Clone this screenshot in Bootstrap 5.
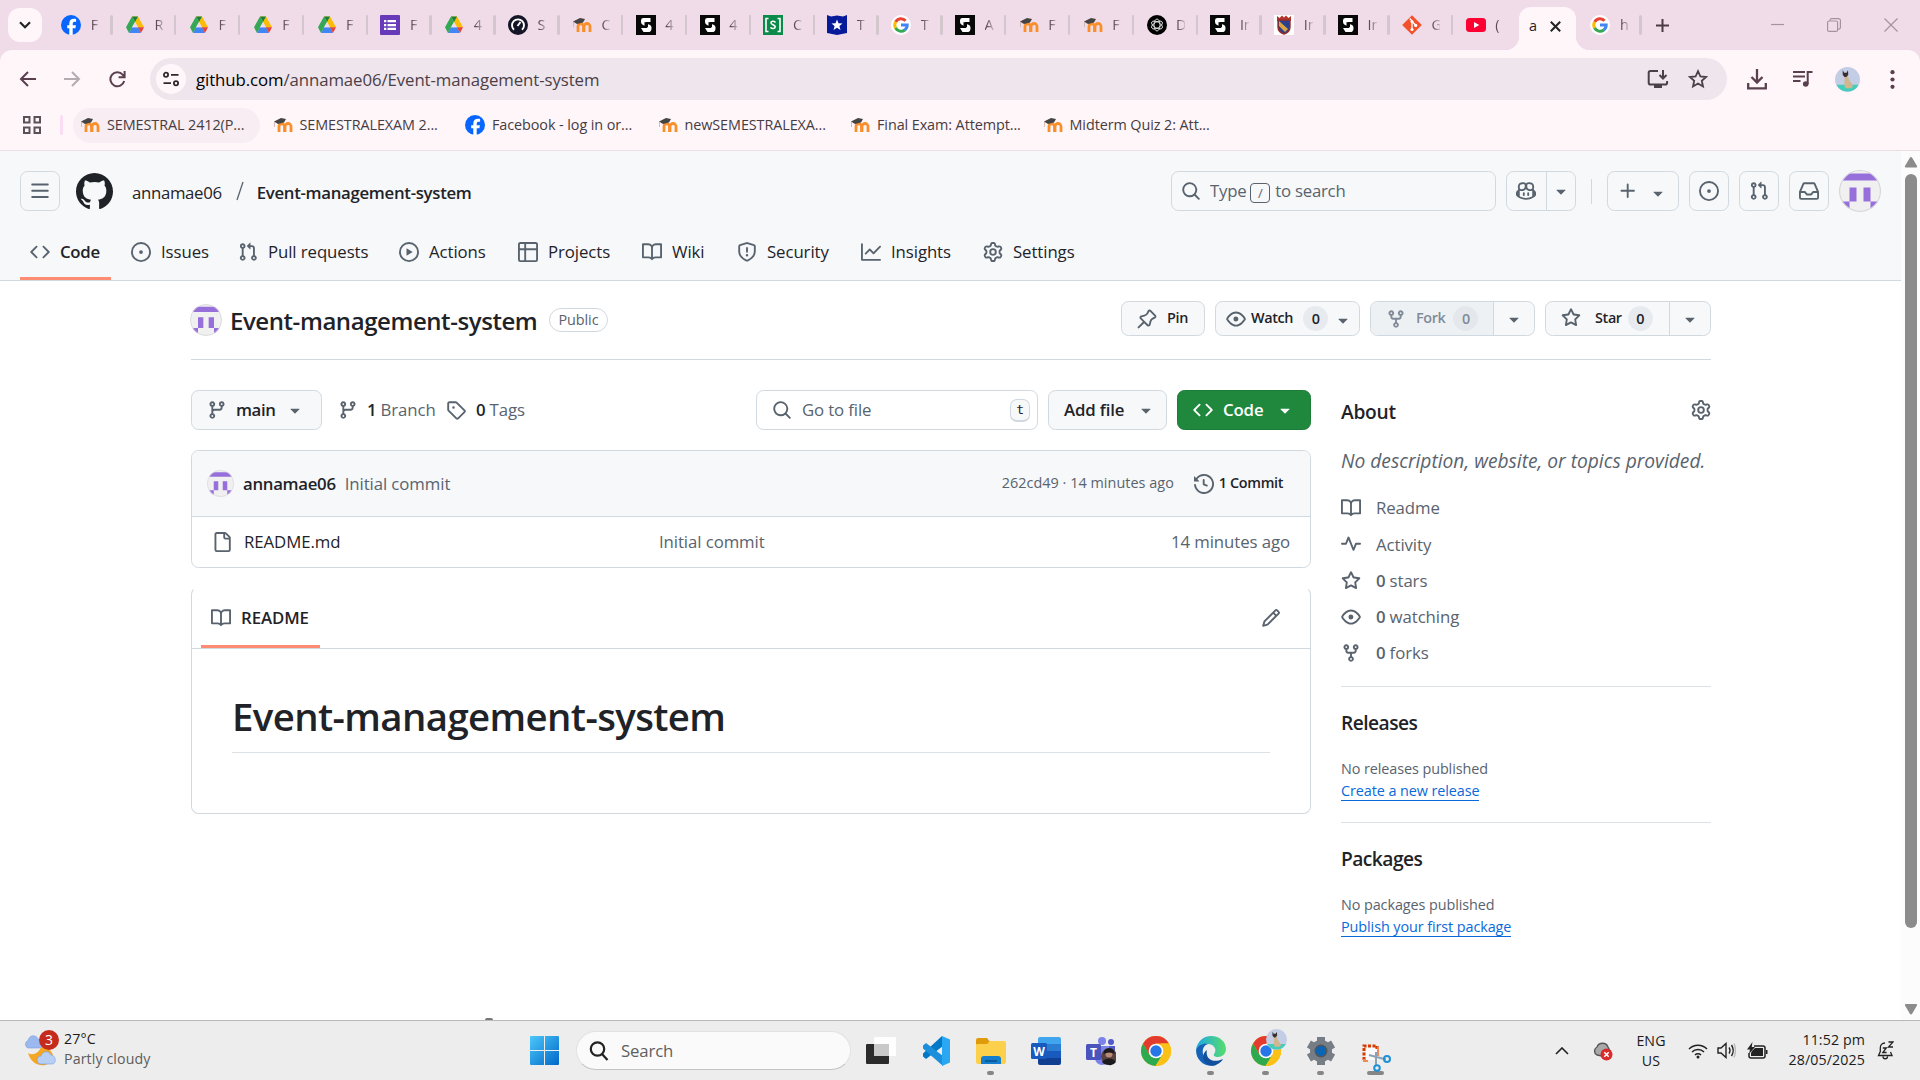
<!DOCTYPE html>
<html lang="en">
<head>
<meta charset="utf-8">
<title>annamae06/Event-management-system</title>
<link href="https://cdn.jsdelivr.net/npm/bootstrap@5.3.0/dist/css/bootstrap.min.css" rel="stylesheet">
<style>
:root{--fg:#1f2328;--muted:#59636e;--line:#d1d9e0;--soft:#f6f8fa;--chrome:#fff6fa}
body{width:1920px;height:1080px;overflow:hidden;font-family:"Open Sans","Noto Sans",sans-serif;font-size:16.8px;letter-spacing:-.005em;line-height:1.4;color:var(--fg);background:#fff}
svg{display:block;flex:none}
.oct{width:20px;height:20px;fill:currentColor;color:var(--muted)}
.semi{font-weight:600;letter-spacing:-.018em}
.t15{font-size:14.4px}
.t20{font-size:19.2px}
.t20.semi{letter-spacing:-.028em}
.muted{color:var(--muted)}
/* browser chrome */
.tabstrip{height:50px;background:#f0dce8}
.tabsearch{width:34px;height:34px;margin:0 6.8px 0 8px;border-radius:12px;background:var(--chrome)}
.btab{width:63.85px;height:50px;padding-left:12.4px;flex:none;position:relative}
.btab svg{width:20px;height:20px}
.btab .lbl{width:9px;margin-left:9.5px;overflow:hidden;white-space:nowrap;font-size:14.4px;color:#5d4a54;-webkit-mask-image:linear-gradient(90deg,#000 20%,rgba(0,0,0,.2))}
.btab .tsep{width:2.4px;height:20px;background:#d3c6cd;border-radius:2px;margin-left:auto}
.tab-on{width:57px;height:43px;margin:7px 2px 0 1.8px;border-radius:12px 12px 0 0;background:var(--chrome);position:relative;flex:none}
.tab-on::before,.tab-on::after{content:"";position:absolute;bottom:0;width:14px;height:14px}
.tab-on::before{left:-14px;background:radial-gradient(circle at 0 0,transparent 14px,var(--chrome) 14.5px)}
.tab-on::after{right:-14px;background:radial-gradient(circle at 100% 0,transparent 14px,var(--chrome) 14.5px)}
.tools{height:100px;background:#f0dce8}
.tools-in{height:100px;background:var(--chrome);border-radius:12px 12px 0 0}
.toolrow{height:58px;color:#5a3f4e}
.omni{width:1577px;height:42px;border-radius:21px;background:#efe5ed;padding:0 19px 0 6px}
.siteinfo{width:30px;height:30px;border-radius:50%;background:var(--chrome)}
.bm{height:35px;padding-bottom:1px}
.bmchip{width:187px;height:35px;margin-right:5.5px;border-radius:18px;padding-left:7px;font-size:14.4px;color:#463c42;white-space:nowrap}
.bmchip svg{width:20px;height:20px;margin-right:7px}
/* page */
.page{height:870px;border-top:1px solid #ecdce4}
.ghhead{height:130px;background:var(--soft);border-bottom:1px solid var(--line)}
.ghrow{height:80px;padding:0 20px}
.sq{border:1px solid var(--line);border-radius:7.5px;height:40px;color:var(--muted)}
.w40{width:40px}
.gsearch{width:325px;padding-left:9px}
.slashkey{border:1px solid var(--muted);border-radius:4px;width:20px;height:20px;font-size:13px;margin:3px 5px 0 4px;line-height:18px}
.ghnav{padding-left:20px;gap:10px;height:49px}
.ghnav a{color:var(--fg);text-decoration:none;padding:0 0 5px 10px;gap:10px;height:49px;border-bottom:3px solid transparent;white-space:nowrap}
.ghnav a.on{border-color:#fd8c73}
.ghnav a:nth-child(1){width:91px}
.ghnav a:nth-child(2){width:97px}
.ghnav a:nth-child(3){width:151px}
.ghnav a:nth-child(4){width:109px}
.ghnav a:nth-child(5){width:114px}
.ghnav a:nth-child(6){width:85px}
.ghnav a:nth-child(7){width:114px}
.ghnav a:nth-child(8){width:112px}
.wrap{width:1520px;margin-left:191px}
.titlebar{height:79px;border-bottom:1px solid var(--line)}
.pill{border:1px solid var(--line);border-radius:12px;height:24px;width:59px;font-size:14.4px;font-weight:500;color:var(--muted);line-height:22px}
.gbtn{height:35px;background:var(--soft);border:1px solid var(--line);border-radius:7.5px;font-size:14.4px;font-weight:600;letter-spacing:-.025em;white-space:nowrap;overflow:hidden}
.gbtn40{height:40px;font-size:16.8px;letter-spacing:-.008em}
.cnt{background:#e7ebef;border-radius:13px;width:25px;height:25px;line-height:25px;text-align:center;font-weight:600}
.caretbox{border-left:1px solid var(--line);align-self:stretch;width:41px}
.maincol{width:1120px;margin-right:30px}
.sidecol{width:370px}
.box{border:1px solid var(--line);border-radius:7.5px}
.boxhead{height:66px;background:var(--soft);border-bottom:1px solid var(--line);border-radius:7px 7px 0 0}
.rdtop{height:61px;border-bottom:1px solid var(--line)}
.rdbox{border-top-color:transparent;height:227px}
.rdtab{height:60px;width:119px;margin-left:9px;border-bottom:3px solid #fd8c73;padding:2px 0 0 10px;gap:10px}
.rdh{font-size:38.4px;font-weight:600;letter-spacing:-.016em;line-height:50px;margin:42px 40px 0;height:62px;border-bottom:1px solid #dce1e6}
.sideitem{height:36.3px;gap:15px}
.sdiv{border-top:1px solid #dce1e6}
.glink{color:#0969da;text-decoration:none;border-bottom:1px solid #0969da;line-height:19px;align-self:flex-start}
.sbar{width:19px;background:#fcfcfc}
.thumb{width:12px;height:754px;border-radius:6px;background:#8b8b8b}
/* taskbar */
.taskbar{height:59px;background:#ededed;border-top:1px solid #b9b9b9;letter-spacing:.008em;font-size:14.2px;color:#1c1c1c;position:relative}
.peek{position:absolute;left:485px;top:-3px;width:8px;height:2px;border-radius:4px 4px 0 0;background:#777}
.tsearch{width:275px;height:39px;border-radius:20px;background:#fafafa;border:1px solid #e2e2e2;border-bottom-color:#c4c4c4;padding-left:12px}
.app{width:55px;height:59px;position:relative;flex:none}
.app>svg{width:30px;height:30px}
.app.run::after{content:"";position:absolute;bottom:5px;left:24px;width:7px;height:4px;border-radius:2px;background:#868686}
.app.wide::after{left:19px;width:17px}
.app .who{position:absolute;width:21px;height:21px;right:6px;top:8px}
.two{line-height:20px}
</style>
</head>
<body class="d-flex flex-column">
<svg width="0" height="0" class="position-absolute" aria-hidden="true">
<symbol id="bars" viewBox="0 0 16 16"><path d="M1 2.75A.75.75 0 0 1 1.75 2h12.5a.75.75 0 0 1 0 1.5H1.75A.75.75 0 0 1 1 2.75Zm0 5A.75.75 0 0 1 1.75 7h12.5a.75.75 0 0 1 0 1.5H1.75A.75.75 0 0 1 1 7.75ZM1.75 12h12.5a.75.75 0 0 1 0 1.5H1.75a.75.75 0 0 1 0-1.5Z"/></symbol>
<symbol id="mark-gh" viewBox="0 0 16 16"><path d="M8 0c4.42 0 8 3.58 8 8a8.013 8.013 0 0 1-5.45 7.59c-.4.08-.55-.17-.55-.38 0-.27.01-1.13.01-2.2 0-.75-.25-1.23-.54-1.48 1.78-.2 3.65-.88 3.65-3.95 0-.88-.31-1.59-.82-2.15.08-.2.36-1.02-.08-2.12 0 0-.67-.22-2.2.82-.64-.18-1.32-.27-2-.27-.68 0-1.36.09-2 .27-1.53-1.03-2.2-.82-2.2-.82-.44 1.1-.16 1.92-.08 2.12-.51.56-.82 1.28-.82 2.15 0 3.06 1.86 3.75 3.64 3.95-.23.2-.44.55-.51 1.07-.46.21-1.61.55-2.33-.66-.15-.24-.6-.83-1.23-.82-.67.01-.27.38.01.53.34.19.73.9.82 1.13.16.45.68 1.31 2.69.94 0 .67.01 1.3.01 1.49 0 .21-.15.45-.55.38A7.995 7.995 0 0 1 0 8c0-4.42 3.58-8 8-8Z"/></symbol>
<symbol id="code" viewBox="0 0 16 16"><path d="m11.28 3.22 4.25 4.25a.75.75 0 0 1 0 1.06l-4.25 4.25a.749.749 0 0 1-1.275-.326.749.749 0 0 1 .215-.734L13.94 8l-3.72-3.72a.749.749 0 0 1 .326-1.275.749.749 0 0 1 .734.215Zm-6.56 0a.751.751 0 0 1 1.042.018.751.751 0 0 1 .018 1.042L2.06 8l3.72 3.72a.749.749 0 0 1-.326 1.275.749.749 0 0 1-.734-.215L.47 8.53a.75.75 0 0 1 0-1.06Z"/></symbol>
<symbol id="issue" viewBox="0 0 16 16"><path d="M8 9.5a1.5 1.5 0 1 0 0-3 1.5 1.5 0 0 0 0 3Z"/><path d="M8 0a8 8 0 1 1 0 16A8 8 0 0 1 8 0ZM1.5 8a6.5 6.5 0 1 0 13 0 6.5 6.5 0 0 0-13 0Z"/></symbol>
<symbol id="pr" viewBox="0 0 16 16"><path d="M1.5 3.25a2.25 2.25 0 1 1 3 2.122v5.256a2.251 2.251 0 1 1-1.5 0V5.372A2.25 2.25 0 0 1 1.5 3.25Zm5.677-.177L9.573.677A.25.25 0 0 1 10 .854V2.5h1A2.5 2.5 0 0 1 13.5 5v5.628a2.251 2.251 0 1 1-1.5 0V5a1 1 0 0 0-1-1h-1v1.646a.25.25 0 0 1-.427.177L7.177 3.427a.25.25 0 0 1 0-.354ZM3.75 2.5a.75.75 0 1 0 0 1.5.75.75 0 0 0 0-1.5Zm0 9.5a.75.75 0 1 0 0 1.5.75.75 0 0 0 0-1.5Zm8.25.75a.75.75 0 1 0 1.5 0 .75.75 0 0 0-1.5 0Z"/></symbol>
<symbol id="play" viewBox="0 0 16 16"><path d="M8 0a8 8 0 1 1 0 16A8 8 0 0 1 8 0ZM1.5 8a6.5 6.5 0 1 0 13 0 6.5 6.5 0 0 0-13 0Zm4.879-2.773 4.264 2.559a.25.25 0 0 1 0 .428l-4.264 2.559A.25.25 0 0 1 6 10.559V5.442a.25.25 0 0 1 .379-.215Z"/></symbol>
<symbol id="grid" viewBox="0 0 16 16"><path d="M0 1.75C0 .784.784 0 1.75 0h12.5C15.216 0 16 .784 16 1.75v12.5A1.75 1.75 0 0 1 14.25 16H1.75A1.75 1.75 0 0 1 0 14.25ZM6.5 6.5v8h7.75a.25.25 0 0 0 .25-.25V6.5Zm8-1.5V1.75a.25.25 0 0 0-.25-.25H6.5V5Zm-13 1.5v7.75c0 .138.112.25.25.25H5v-8ZM5 5V1.5H1.75a.25.25 0 0 0-.25.25V5Z"/></symbol>
<symbol id="book" viewBox="0 0 16 16"><path d="M0 1.75A.75.75 0 0 1 .75 1h4.253c1.227 0 2.317.59 3 1.501A3.743 3.743 0 0 1 11.006 1h4.245a.75.75 0 0 1 .75.75v10.5a.75.75 0 0 1-.75.75h-4.507a2.25 2.25 0 0 0-1.591.659l-.622.621a.75.75 0 0 1-1.06 0l-.622-.621A2.25 2.25 0 0 0 5.258 13H.75a.75.75 0 0 1-.75-.75Zm7.251 10.324.004-5.073-.002-2.253A2.25 2.25 0 0 0 5.003 2.5H1.5v9h3.757a3.75 3.75 0 0 1 1.994.574ZM8.755 4.75l-.004 7.322a3.752 3.752 0 0 1 1.992-.572H14.5v-9h-3.495a2.25 2.25 0 0 0-2.25 2.25Z"/></symbol>
<symbol id="shield" viewBox="0 0 16 16"><path d="M7.467.133a1.748 1.748 0 0 1 1.066 0l5.25 1.68A1.75 1.75 0 0 1 15 3.48V7c0 1.566-.32 3.182-1.303 4.682-.983 1.498-2.585 2.813-5.032 3.855a1.697 1.697 0 0 1-1.33 0c-2.447-1.042-4.049-2.357-5.032-3.855C1.32 10.182 1 8.566 1 7V3.48a1.75 1.75 0 0 1 1.217-1.667Zm.61 1.429a.25.25 0 0 0-.153 0l-5.25 1.68a.25.25 0 0 0-.174.238V7c0 1.358.275 2.666 1.057 3.86.784 1.194 2.121 2.34 4.366 3.297a.196.196 0 0 0 .154 0c2.245-.956 3.582-2.104 4.366-3.298C13.225 9.666 13.5 8.36 13.5 7V3.48a.251.251 0 0 0-.174-.237l-5.25-1.68ZM8.75 4.75v3a.75.75 0 0 1-1.5 0v-3a.75.75 0 0 1 1.5 0ZM9 10.5a1 1 0 1 1-2 0 1 1 0 0 1 2 0Z"/></symbol>
<symbol id="graph" viewBox="0 0 16 16"><path d="M1.5 1.75V13.5h13.75a.75.75 0 0 1 0 1.5H.75a.75.75 0 0 1-.75-.75V1.75a.75.75 0 0 1 1.5 0Zm14.28 2.53-5.25 5.25a.75.75 0 0 1-1.06 0L7 7.06 4.28 9.78a.751.751 0 0 1-1.042-.018.751.751 0 0 1-.018-1.042l3.25-3.25a.75.75 0 0 1 1.06 0L10 7.94l4.72-4.72a.751.751 0 0 1 1.042.018.751.751 0 0 1 .018 1.042Z"/></symbol>
<symbol id="gear" viewBox="0 0 16 16"><path d="M8 0a8.2 8.2 0 0 1 .701.031C9.444.095 9.99.645 10.16 1.29l.288 1.107c.018.066.079.158.212.224.231.114.454.243.668.386.123.082.233.09.299.071l1.103-.303c.644-.176 1.392.021 1.82.63.27.385.506.792.704 1.218.315.675.111 1.422-.364 1.891l-.814.806c-.049.048-.098.147-.088.294.016.257.016.515 0 .772-.01.147.038.246.088.294l.814.806c.475.469.679 1.216.364 1.891a7.977 7.977 0 0 1-.704 1.217c-.428.61-1.176.807-1.82.63l-1.102-.302c-.067-.019-.177-.011-.3.071a5.909 5.909 0 0 1-.668.386c-.133.066-.194.158-.211.224l-.29 1.106c-.168.646-.715 1.196-1.458 1.26a8.006 8.006 0 0 1-1.402 0c-.743-.064-1.289-.614-1.458-1.26l-.289-1.106c-.018-.066-.079-.158-.212-.224a5.738 5.738 0 0 1-.668-.386c-.123-.082-.233-.09-.299-.071l-1.103.303c-.644.176-1.392-.021-1.82-.63a8.12 8.12 0 0 1-.704-1.218c-.315-.675-.111-1.422.363-1.891l.815-.806c.05-.048.098-.147.088-.294a6.214 6.214 0 0 1 0-.772c.01-.147-.038-.246-.088-.294l-.815-.806C.635 6.045.431 5.298.746 4.623a7.92 7.92 0 0 1 .704-1.217c.428-.61 1.176-.807 1.82-.63l1.102.302c.067.019.177.011.3-.071.214-.143.437-.272.668-.386.133-.066.194-.158.211-.224l.29-1.106C6.009.645 6.556.095 7.299.03 7.53.01 7.764 0 8 0Zm-.571 1.525c-.036.003-.108.036-.137.146l-.289 1.105c-.147.561-.549.967-.998 1.189-.173.086-.34.183-.5.29-.417.278-.97.423-1.529.27l-1.103-.303c-.109-.03-.175.016-.195.045-.22.312-.412.644-.573.99-.014.031-.021.11.059.19l.815.806c.411.406.562.957.53 1.456a4.709 4.709 0 0 0 0 .582c.032.499-.119 1.05-.53 1.456l-.815.806c-.081.08-.073.159-.059.19.162.346.353.677.573.989.02.03.085.076.195.046l1.102-.303c.56-.153 1.113-.008 1.53.27.161.107.328.204.501.29.447.222.85.629.997 1.189l.289 1.105c.029.109.101.143.137.146a6.6 6.6 0 0 0 1.142 0c.036-.003.108-.036.137-.146l.289-1.105c.147-.561.549-.967.998-1.189.173-.086.34-.183.5-.29.417-.278.97-.423 1.529-.27l1.103.303c.109.029.175-.016.195-.045.22-.313.411-.644.573-.99.014-.031.021-.11-.059-.19l-.815-.806c-.411-.406-.562-.957-.53-1.456a4.709 4.709 0 0 0 0-.582c-.032-.499.119-1.05.53-1.456l.815-.806c.081-.08.073-.159.059-.19a6.464 6.464 0 0 0-.573-.989c-.02-.03-.085-.076-.195-.046l-1.102.303c-.56.153-1.113.008-1.53-.27a4.44 4.44 0 0 0-.501-.29c-.447-.222-.85-.629-.997-1.189l-.289-1.105c-.029-.11-.101-.143-.137-.146a6.6 6.6 0 0 0-1.142 0ZM11 8a3 3 0 1 1-6 0 3 3 0 0 1 6 0ZM9.5 8a1.5 1.5 0 1 0-3.001.001A1.5 1.5 0 0 0 9.5 8Z"/></symbol>
<symbol id="find" viewBox="0 0 16 16"><path d="M10.68 11.74a6 6 0 0 1-7.922-8.982 6 6 0 0 1 8.982 7.922l3.04 3.04a.749.749 0 0 1-.326 1.275.749.749 0 0 1-.734-.215ZM11.5 7a4.499 4.499 0 1 0-8.997 0A4.499 4.499 0 0 0 11.5 7Z"/></symbol>
<symbol id="copilot" viewBox="0 0 16 16"><path d="M7.998 15.035c-4.562 0-7.873-2.914-7.998-3.749V9.338c.085-.628.677-1.686 1.588-2.065.013-.07.024-.143.036-.218.029-.183.06-.384.126-.612-.201-.508-.254-1.084-.254-1.656 0-.87.128-1.769.693-2.484.579-.733 1.494-1.124 2.724-1.261 1.206-.134 2.262.034 2.944.765.05.053.096.108.139.165.044-.057.094-.112.143-.165.682-.731 1.738-.899 2.944-.765 1.23.137 2.145.528 2.724 1.261.566.715.693 1.614.693 2.484 0 .572-.053 1.148-.254 1.656.066.228.098.429.126.612.012.076.024.148.037.218.924.385 1.522 1.471 1.591 2.095v1.872c0 .766-3.351 3.795-8.002 3.795Zm0-1.485c2.28 0 4.584-1.11 5.002-1.433V7.862l-.023-.116c-.49.21-1.075.291-1.727.291-1.146 0-2.059-.327-2.71-.991A3.222 3.222 0 0 1 8 6.303a3.24 3.24 0 0 1-.544.743c-.65.664-1.563.991-2.71.991-.652 0-1.236-.081-1.727-.291l-.023.116v4.255c.419.323 2.722 1.433 5.002 1.433ZM6.762 2.83c-.193-.206-.637-.413-1.682-.297-1.019.113-1.479.404-1.713.7-.247.312-.369.789-.369 1.554 0 .793.129 1.171.308 1.371.162.181.519.379 1.442.379.853 0 1.339-.235 1.638-.54.315-.322.527-.827.617-1.553.117-.935-.037-1.395-.241-1.614Zm4.155-.297c-1.044-.116-1.488.091-1.681.297-.204.219-.359.679-.242 1.614.091.726.303 1.231.618 1.553.299.305.784.54 1.638.54.922 0 1.28-.198 1.442-.379.179-.2.308-.578.308-1.371 0-.765-.123-1.242-.37-1.554-.233-.296-.693-.587-1.713-.7Z"/><path d="M6.25 9.037a.75.75 0 0 1 .75.75v1.501a.75.75 0 0 1-1.5 0V9.787a.75.75 0 0 1 .75-.75Zm4.25.75v1.501a.75.75 0 0 1-1.5 0V9.787a.75.75 0 0 1 1.5 0Z"/></symbol>
<symbol id="tri" viewBox="0 0 16 16"><path d="m4.427 7.427 3.396 3.396a.25.25 0 0 0 .354 0l3.396-3.396A.25.25 0 0 0 11.396 7H4.604a.25.25 0 0 0-.177.427Z"/></symbol>
<symbol id="plus" viewBox="0 0 16 16"><path d="M7.75 2a.75.75 0 0 1 .75.75V7h4.25a.75.75 0 0 1 0 1.5H8.5v4.25a.75.75 0 0 1-1.5 0V8.5H2.75a.75.75 0 0 1 0-1.5H7V2.75A.75.75 0 0 1 7.75 2Z"/></symbol>
<symbol id="inbox" viewBox="0 0 16 16"><path d="M2.8 2.06A1.75 1.75 0 0 1 4.41 1h7.18c.7 0 1.333.417 1.61 1.06l2.74 6.395c.04.093.06.194.06.295v4.5A1.75 1.75 0 0 1 14.25 15H1.75A1.75 1.75 0 0 1 0 13.25v-4.5c0-.101.02-.202.06-.295Zm1.61.44a.25.25 0 0 0-.23.152L1.887 8H4.75a.75.75 0 0 1 .6.3L6.625 10h2.75l1.275-1.7a.75.75 0 0 1 .6-.3h2.863L11.82 2.652a.25.25 0 0 0-.23-.152Zm10.09 7h-2.875l-1.275 1.7a.75.75 0 0 1-.6.3h-3.5a.75.75 0 0 1-.6-.3L4.375 9.5H1.5v3.75c0 .138.112.25.25.25h12.5a.25.25 0 0 0 .25-.25Z"/></symbol>
<symbol id="pin" viewBox="0 0 16 16"><path d="m11.294.984 3.722 3.722a1.75 1.75 0 0 1-.504 2.826l-1.327.613a3.089 3.089 0 0 0-1.707 2.084l-.584 2.454c-.317 1.332-1.972 1.8-2.94.832L5.75 11.311 1.78 15.28a.749.749 0 1 1-1.06-1.06l3.969-3.97-2.204-2.204c-.968-.968-.5-2.623.832-2.94l2.454-.584a3.08 3.08 0 0 0 2.084-1.707l.613-1.327a1.75 1.75 0 0 1 2.826-.504ZM6.283 9.723l2.732 2.731a.25.25 0 0 0 .42-.119l.584-2.454a4.586 4.586 0 0 1 2.537-3.098l1.328-.613a.25.25 0 0 0 .072-.404l-3.722-3.722a.25.25 0 0 0-.404.072l-.613 1.328a4.584 4.584 0 0 1-3.098 2.537l-2.454.584a.25.25 0 0 0-.119.42l2.731 2.732Z"/></symbol>
<symbol id="eye" viewBox="0 0 16 16"><path d="M8 2c1.981 0 3.671.992 4.933 2.078 1.27 1.091 2.187 2.345 2.637 3.023a1.62 1.62 0 0 1 0 1.798c-.45.678-1.367 1.932-2.637 3.023C11.67 13.008 9.981 14 8 14c-1.981 0-3.671-.992-4.933-2.078C1.797 10.83.88 9.576.43 8.898a1.62 1.62 0 0 1 0-1.798c.45-.677 1.367-1.931 2.637-3.022C4.33 2.992 6.019 2 8 2ZM1.679 7.932a.12.12 0 0 0 0 .136c.411.622 1.241 1.75 2.366 2.717C5.176 11.758 6.527 12.5 8 12.5c1.473 0 2.825-.742 3.955-1.715 1.124-.967 1.954-2.096 2.366-2.717a.12.12 0 0 0 0-.136c-.412-.621-1.242-1.75-2.366-2.717C10.824 4.242 9.473 3.5 8 3.5c-1.473 0-2.825.742-3.955 1.715-1.124.967-1.954 2.096-2.366 2.717ZM8 10a2 2 0 1 1-.001-3.999A2 2 0 0 1 8 10Z"/></symbol>
<symbol id="fork" viewBox="0 0 16 16"><path d="M5 5.372v.878c0 .414.336.75.75.75h4.5a.75.75 0 0 0 .75-.75v-.878a2.25 2.25 0 1 1 1.5 0v.878a2.25 2.25 0 0 1-2.25 2.25h-1.5v2.128a2.251 2.251 0 1 1-1.5 0V8.5h-1.5A2.25 2.25 0 0 1 3.5 6.25v-.878a2.25 2.25 0 1 1 1.5 0ZM5 3.25a.75.75 0 1 0-1.5 0 .75.75 0 0 0 1.5 0Zm6.75.75a.75.75 0 1 0 0-1.5.75.75 0 0 0 0 1.5Zm-3 8.75a.75.75 0 1 0-1.5 0 .75.75 0 0 0 1.5 0Z"/></symbol>
<symbol id="star" viewBox="0 0 16 16"><path d="M8 .25a.75.75 0 0 1 .673.418l1.882 3.815 4.21.612a.75.75 0 0 1 .416 1.279l-3.046 2.97.719 4.192a.751.751 0 0 1-1.088.791L8 12.347l-3.766 1.98a.75.75 0 0 1-1.088-.79l.72-4.194L.818 6.374a.75.75 0 0 1 .416-1.28l4.21-.611L7.327.668A.75.75 0 0 1 8 .25Zm0 2.445L6.615 5.5a.75.75 0 0 1-.564.41l-3.097.45 2.24 2.184a.75.75 0 0 1 .216.664l-.528 3.084 2.769-1.456a.75.75 0 0 1 .698 0l2.77 1.456-.53-3.084a.75.75 0 0 1 .216-.664l2.24-2.183-3.096-.45a.75.75 0 0 1-.564-.41L8 2.694Z"/></symbol>
<symbol id="branch" viewBox="0 0 16 16"><path d="M9.5 3.25a2.25 2.25 0 1 1 3 2.122V6A2.5 2.5 0 0 1 10 8.5H6a1 1 0 0 0-1 1v1.128a2.251 2.251 0 1 1-1.5 0V5.372a2.25 2.25 0 1 1 1.5 0v1.836A2.493 2.493 0 0 1 6 7h4a1 1 0 0 0 1-1v-.628A2.25 2.25 0 0 1 9.5 3.25Zm-6 0a.75.75 0 1 0 1.5 0 .75.75 0 0 0-1.5 0Zm8.25-.75a.75.75 0 1 0 0 1.5.75.75 0 0 0 0-1.5ZM4.25 12a.75.75 0 1 0 0 1.5.75.75 0 0 0 0-1.5Z"/></symbol>
<symbol id="tag" viewBox="0 0 16 16"><path d="M1 7.775V2.75C1 1.784 1.784 1 2.75 1h5.025c.464 0 .91.184 1.238.513l6.25 6.25a1.75 1.75 0 0 1 0 2.474l-5.026 5.026a1.75 1.75 0 0 1-2.474 0l-6.25-6.25A1.752 1.752 0 0 1 1 7.775Zm1.5 0c0 .066.026.13.073.177l6.25 6.25a.25.25 0 0 0 .354 0l5.025-5.025a.25.25 0 0 0 0-.354l-6.25-6.25a.25.25 0 0 0-.177-.073H2.75a.25.25 0 0 0-.25.25ZM6 5a1 1 0 1 1 0 2 1 1 0 0 1 0-2Z"/></symbol>
<symbol id="history" viewBox="0 0 16 16"><path d="m.427 1.927 1.215 1.215a8.002 8.002 0 1 1-1.6 5.685.75.75 0 1 1 1.493-.154 6.5 6.5 0 1 0 1.18-4.458l1.358 1.358A.25.25 0 0 1 3.896 6H.25A.25.25 0 0 1 0 5.75V2.104a.25.25 0 0 1 .427-.177ZM7.75 4a.75.75 0 0 1 .75.75v2.992l2.028.812a.75.75 0 0 1-.557 1.392l-2.5-1A.751.751 0 0 1 7 8.25v-3.5A.75.75 0 0 1 7.75 4Z"/></symbol>
<symbol id="file" viewBox="0 0 16 16"><path d="M2 1.75C2 .784 2.784 0 3.75 0h6.586c.464 0 .909.184 1.237.513l2.914 2.914c.329.328.513.773.513 1.237v9.586A1.75 1.75 0 0 1 13.25 16h-9.5A1.75 1.75 0 0 1 2 14.25Zm1.75-.25a.25.25 0 0 0-.25.25v12.5c0 .138.112.25.25.25h9.5a.25.25 0 0 0 .25-.25V6h-2.75A1.75 1.75 0 0 1 9 4.25V1.5Zm6.75.062V4.25c0 .138.112.25.25.25h2.688l-.011-.013-2.914-2.914-.013-.011Z"/></symbol>
<symbol id="pencil" viewBox="0 0 16 16"><path d="M11.013 1.427a1.75 1.75 0 0 1 2.474 0l1.086 1.086a1.75 1.75 0 0 1 0 2.474l-8.61 8.61c-.21.21-.47.364-.756.445l-3.251.93a.75.75 0 0 1-.927-.928l.929-3.25c.081-.286.235-.547.445-.758l8.61-8.61Zm.176 4.823L9.75 4.81l-6.286 6.287a.253.253 0 0 0-.064.108l-.558 1.953 1.953-.558a.253.253 0 0 0 .108-.064Zm1.238-3.763a.25.25 0 0 0-.354 0L10.811 3.75l1.439 1.44 1.263-1.263a.25.25 0 0 0 0-.354Z"/></symbol>
<symbol id="pulse" viewBox="0 0 16 16"><path d="M6 2c.306 0 .582.187.696.471L10 10.731l1.304-3.26A.751.751 0 0 1 12 7h3.25a.75.75 0 0 1 0 1.5h-2.742l-1.812 4.528a.751.751 0 0 1-1.392 0L6 4.77 4.696 8.03A.75.75 0 0 1 4 8.5H.75a.75.75 0 0 1 0-1.5h2.742l1.812-4.529A.751.751 0 0 1 6 2Z"/></symbol>
<clipPath id="round6"><circle cx="3" cy="3" r="2.95"/></clipPath>
<symbol id="ident" viewBox="0 0 6 6"><circle cx="3" cy="3" r="2.92" fill="#f0f0f0"/><path clip-path="url(#round6)" fill="#976fdb" d="M.5.5h5v1h-5zM1.5 2.500h1v2h-1zM3.500 2.500h1v2h-1zM.5 4.500h1v1h-1zM4.500 4.500h1v1h-1z"/><circle cx="3" cy="3" r="2.92" fill="none" stroke="#d5d5da" stroke-width=".15"/></symbol>
<symbol id="fb" viewBox="0 0 20 20"><circle cx="10" cy="10" r="10" fill="#0866ff"/><path fill="#fff" d="M8.300 19.900v-6.700H6.200v-3h2.100V8.800c0-3.400 1.500-5 4.900-5 .6 0 1.500.1 1.900.2v2.800h-1.100c-1.600 0-2.300.6-2.300 2.200v1.200h3.200l-.5 3h-2.700v6.700z"/></symbol>
<symbol id="drive" viewBox="0 0 20 18"><path fill="#fbbc04" d="M7 .5h6l6 10.700h-6z"/><path fill="#188038" d="M7 .5h6L10 6z"/><path fill="#4285f4" d="M6.700 11.200h6.600L16 17H4z"/><path fill="#34a853" d="M7 .5 1 11.200 4 17l3-5.800L10 6z"/><path fill="#ea4335" d="M13 11.200h6L16 17z"/><path fill="#f0dce8" d="M10 6.300 12.900 11.200H7.100z"/></symbol>
<symbol id="forms" viewBox="0 0 20 20"><rect width="20" height="20" rx="1" fill="#673ab7"/><path fill="#fff" d="M4 5h2.300v2.300H4zM7.500 5H16v2.300H7.500zM4 8.900h2.300v2.300H4zM7.500 8.900H16v2.300H7.500zM4 12.800h2.300v2.300H4zM7.500 12.800H16v2.300H7.500z"/></symbol>
<symbol id="speed" viewBox="0 0 20 20"><circle cx="10" cy="10" r="10" fill="#141526"/><path d="M6 14.800a6 6 0 1 1 8 0M9.500 11l3-4" fill="none" stroke="#fff" stroke-width="1.900"/></symbol>
<symbol id="moodle" viewBox="0 0 20 20"><path d="M6 17V11.500a2.500 2.500 0 0 1 5.500 0V17M12 17v-5.500a2.800 2.800 0 0 1 6 0V17" fill="none" stroke="#f98f2b" stroke-width="2.800"/><path fill="#444" d="M1 6.500 8 3l5 1L11 7.500 5 9z"/><path d="M1.500 7v5" stroke="#ccb0a8" stroke-width=".8"/></symbol>
<symbol id="sco" viewBox="0 0 20 20"><rect width="20" height="20" fill="#080808"/><path fill="#fff" d="M7 3h7.500v4H9.500v1.300l4 1.500q2 .8 2 2.800v.8q0 3.600-3.600 3.600H7.500L5 13h6v-1.500l-4-1.600Q5 9 5 7V5.500Q5 3 7 3z"/><path fill="#080808" d="m8.500 7 3.500 1.200v4.300L8.500 11z"/></symbol>
<symbol id="sgreen" viewBox="0 0 20 20"><rect width="20" height="20" fill="#0b8a4a"/><path d="M5.500 3.500H3v13h2.500M14.500 3.500H17v13h-2.500M12.500 7.500C11 5.500 7.800 6.200 8 8s4.200 1.800 4.200 3.800-3.500 2.400-4.700.6" fill="none" stroke="#fff" stroke-width="1.600"/></symbol>
<symbol id="starflag" viewBox="0 0 20 20"><path fill="#061a9a" d="M0 0 4 1.500 10 .5l6 1 4-1.500v18l-10 2L0 18z"/><path fill="#fff" d="m10 4.500 1.500 3.800 4 .2-3.100 2.500 1.100 3.900-3.500-2.200-3.500 2.200L7.600 11 4.500 8.500l4-.2z"/></symbol>
<symbol id="goog" viewBox="0 0 20 20"><circle cx="10" cy="10" r="10" fill="#fff"/><g fill="none" stroke-width="3"><path stroke="#ea4335" d="M14.600 5.800A6.200 6.200 0 0 0 4.600 7"/><path stroke="#fbbc04" d="M4.700 6.800a6.200 6.200 0 0 0 0 6.400"/><path stroke="#34a853" d="M4.600 13a6.200 6.200 0 0 0 9.200 2"/><path stroke="#4285f4" d="M10 10h6.200a6.200 6.200 0 0 1-2.600 5.100"/></g></symbol>
<symbol id="gpt" viewBox="0 0 20 20"><circle cx="10" cy="10" r="10" fill="#000"/><g fill="none" stroke="#fff" stroke-width=".8"><ellipse cx="10" cy="10" rx="3" ry="6"/><ellipse cx="10" cy="10" rx="3" ry="6" transform="rotate(60 10 10)"/><ellipse cx="10" cy="10" rx="3" ry="6" transform="rotate(120 10 10)"/></g></symbol>
<symbol id="crest" viewBox="0 0 20 20"><rect width="20" height="20" fill="#fff"/><path fill="#b5342a" d="m3 1 2.500 2L8 .5 10 2.500 12 .5 14.500 3 17 1v5H3z"/><path fill="#2b3f8c" stroke="#9a2c27" stroke-width="1.400" d="M4 5h12v7c0 4-3 6-6 7-3-1-6-3-6-7z"/><path fill="#d9a441" d="m5 6 9 8-3 3-6-6z"/></symbol>
<symbol id="git" viewBox="0 0 20 20"><path fill="#f4502a" d="M10 .2 19.800 10 10 19.800.2 10z"/><path d="M7.800 3.500 10 6v9M10 6.500l4 4" fill="none" stroke="#fff" stroke-width="1.300"/><g fill="#fff"><circle cx="10" cy="6.500" r="1.500"/><circle cx="10" cy="14.500" r="1.600"/><circle cx="13.700" cy="10.400" r="1.600"/></g></symbol>
<symbol id="yt" viewBox="0 0 20 20"><rect y="3" width="20" height="14" rx="3.500" fill="#ff0033"/><path fill="#fff" d="m8 7 5.300 3L8 13z"/></symbol>
<symbol id="cat" viewBox="0 0 26 26"><circle cx="13" cy="13" r="13" fill="#c3cde6"/><path fill="#43cdbb" d="M1.500 18.500h23a13 13 0 0 1-23 0z"/><path fill="#cfb78f" d="M10 9c2-1 4 0 4 3l3 5c2 2 2 4 0 5h-6c-2-3-1-7-1-13z"/><path fill="#3b2f2d" d="m8 3.500 1.500 2.500h2.500l1.500-2.500.3 4.500-2 2.500h-2L8 8z"/></symbol>
<symbol id="chromeapp" viewBox="0 0 30 30"><circle cx="15" cy="15" r="15" fill="#fbc116"/><path fill="#e33b2e" d="M2 7.500A15 15 0 0 1 28 7.500H15L8.500 18.800z"/><path fill="#2da94f" d="M2 7.500A15 15 0 0 0 14.500 30L21.500 18.700H8.500z"/><path fill="#fbc116" d="M28 7.500A15 15 0 0 1 14.500 30l7-11.300L20 7.500z"/><circle cx="15" cy="15" r="7.300" fill="#fff"/><circle cx="15" cy="15" r="5.700" fill="#2676e8"/></symbol>
</svg>

<header class="tabstrip d-flex align-items-center flex-shrink-0">
  <div class="tabsearch d-flex align-items-center justify-content-center"><svg width="12" height="8" viewBox="0 0 12 8" fill="none" stroke="#222" stroke-width="2.200"><path d="m1 1.200 5 5 5-5"/></svg></div>
  <div class="btab d-flex align-items-center"><svg><use href="#fb"/></svg><span class="lbl">F</span><i class="tsep"></i></div>
  <div class="btab d-flex align-items-center"><svg><use href="#drive"/></svg><span class="lbl">R</span><i class="tsep"></i></div>
  <div class="btab d-flex align-items-center"><svg><use href="#drive"/></svg><span class="lbl">F</span><i class="tsep"></i></div>
  <div class="btab d-flex align-items-center"><svg><use href="#drive"/></svg><span class="lbl">F</span><i class="tsep"></i></div>
  <div class="btab d-flex align-items-center"><svg><use href="#drive"/></svg><span class="lbl">F</span><i class="tsep"></i></div>
  <div class="btab d-flex align-items-center"><svg><use href="#forms"/></svg><span class="lbl">F</span><i class="tsep"></i></div>
  <div class="btab d-flex align-items-center"><svg><use href="#drive"/></svg><span class="lbl">4</span><i class="tsep"></i></div>
  <div class="btab d-flex align-items-center"><svg><use href="#speed"/></svg><span class="lbl">S</span><i class="tsep"></i></div>
  <div class="btab d-flex align-items-center"><svg><use href="#moodle"/></svg><span class="lbl">C</span><i class="tsep"></i></div>
  <div class="btab d-flex align-items-center"><svg><use href="#sco"/></svg><span class="lbl">4</span><i class="tsep"></i></div>
  <div class="btab d-flex align-items-center"><svg><use href="#sco"/></svg><span class="lbl">4</span><i class="tsep"></i></div>
  <div class="btab d-flex align-items-center"><svg><use href="#sgreen"/></svg><span class="lbl">C</span><i class="tsep"></i></div>
  <div class="btab d-flex align-items-center"><svg><use href="#starflag"/></svg><span class="lbl">T</span><i class="tsep"></i></div>
  <div class="btab d-flex align-items-center"><svg><use href="#goog"/></svg><span class="lbl">T</span><i class="tsep"></i></div>
  <div class="btab d-flex align-items-center"><svg><use href="#sco"/></svg><span class="lbl">A</span><i class="tsep"></i></div>
  <div class="btab d-flex align-items-center"><svg><use href="#moodle"/></svg><span class="lbl">F</span><i class="tsep"></i></div>
  <div class="btab d-flex align-items-center"><svg><use href="#moodle"/></svg><span class="lbl">F</span><i class="tsep"></i></div>
  <div class="btab d-flex align-items-center"><svg><use href="#gpt"/></svg><span class="lbl">D</span><i class="tsep"></i></div>
  <div class="btab d-flex align-items-center"><svg><use href="#sco"/></svg><span class="lbl">In</span><i class="tsep"></i></div>
  <div class="btab d-flex align-items-center"><svg><use href="#crest"/></svg><span class="lbl">In</span><i class="tsep"></i></div>
  <div class="btab d-flex align-items-center"><svg><use href="#sco"/></svg><span class="lbl">In</span><i class="tsep"></i></div>
  <div class="btab d-flex align-items-center"><svg><use href="#git"/></svg><span class="lbl">G</span><i class="tsep"></i></div>
  <div class="btab d-flex align-items-center"><svg><use href="#yt"/></svg><span class="lbl">(</span></div>
  <div class="tab-on d-flex align-items-center ps-2 pb-2"><span class="t15 mt-1" style="margin-left:2px">a</span><svg class="mt-1" style="margin-left:13px" width="11" height="11" viewBox="0 0 11 11" stroke="#222" stroke-width="2"><path d="m.8.8 9.400 9.400M10.200.8.8 10.200"/></svg></div>
  <div class="btab d-flex align-items-center"><svg><use href="#goog"/></svg><span class="lbl">h</span><i class="tsep"></i></div>
  <svg style="margin-left:14px" width="13" height="13" viewBox="0 0 13 13" stroke="#4a3a42" stroke-width="2"><path d="M6.500 0v13M0 6.500h13"/></svg>
  <div class="d-flex align-items-center ms-auto" style="gap:43px;margin-right:22px">
    <svg width="13" height="13" viewBox="0 0 13 13" stroke="#a3949c" stroke-width="1.200"><path d="M0 5.500h13"/></svg>
    <svg width="14" height="14" viewBox="0 0 14 14" fill="none" stroke="#a3949c" stroke-width="1.200"><rect x=".6" y="3" width="10" height="10.400" rx="1.500"/><path d="M3 3V2.200A1.600 1.600 0 0 1 4.600.6h7a1.800 1.800 0 0 1 1.800 1.800v7.200a1.500 1.500 0 0 1-1.500 1.500h-1"/></svg>
    <svg width="14" height="14" viewBox="0 0 14 14" stroke="#a3949c" stroke-width="1.200"><path d="m.5.5 13 13M13.500.5l-13 13"/></svg>
  </div>
</header>

<div class="tools flex-shrink-0"><div class="tools-in">
  <div class="toolrow d-flex align-items-center">
    <svg style="margin-left:19px" width="17" height="16" viewBox="0 0 17 16" fill="none" stroke="#5a3f4e" stroke-width="2"><path d="M9 1 2 8l7 7M2 8h15"/></svg>
    <svg style="margin-left:28px" width="17" height="16" viewBox="0 0 17 16" fill="none" stroke="#b5aab0" stroke-width="2"><path d="m8 1 7 7-7 7M15 8H0"/></svg>
    <svg style="margin-left:28px" width="17" height="17" viewBox="0 0 17 17" fill="none" stroke="#5a3f4e" stroke-width="2"><path d="M15.200 10a7 7 0 1 1-1.400-6.200L15.500 6M15.600 0v6.200h-6"/></svg>
    <div class="omni d-flex align-items-center" style="margin-left:24px">
      <div class="siteinfo d-flex align-items-center justify-content-center"><svg width="16" height="16" viewBox="0 0 16 16" fill="none" stroke="#33272d" stroke-width="1.800"><circle cx="3" cy="3.800" r="2.100"/><circle cx="13" cy="12.200" r="2.100"/><path d="M8 3.800h7.500M.5 12.200H8"/></svg></div>
      <span style="margin-left:10px;padding-top:1px;color:#4b4046"><span class="text-black">github.com</span>/annamae06/Event-management-system</span>
      <svg class="ms-auto" width="22" height="20" viewBox="0 0 22 20" fill="none" stroke="#4b4046" stroke-width="2"><path d="M11 2H3.500A1.800 1.800 0 0 0 1.700 3.800v10a1.800 1.800 0 0 0 1.800 1.800h14.800a1.800 1.800 0 0 0 1.800-1.800V12M16 1v8M12.500 6l3.500 3.500L19.500 6"/><path d="M7 16h8v3H7z" fill="#4b4046" stroke="none"/></svg>
      <svg style="margin-left:19px" width="20" height="20" viewBox="0 0 20 20" fill="none" stroke="#4b4046" stroke-width="1.800"><path d="m10 2.200 2.400 5.300 5.600.5-4.200 3.800 1.200 5.700-5-3-5 3 1.200-5.700L2 8l5.600-.5z"/></svg>
    </div>
    <svg style="margin-left:20px" width="20" height="21" viewBox="0 0 20 21" fill="none" stroke="#5a3f4e" stroke-width="2.300"><path d="M10 0v13M4.500 8l5.500 5.500L15.500 8M1.200 14v5.300h17.600V14"/></svg>
    <svg style="margin-left:26px" width="20" height="18" viewBox="0 0 20 18" fill="none" stroke="#5a3f4e" stroke-width="2"><path d="M0 2h12M0 6.500h12M0 11h7.500M14.700 14V2H19.500"/><circle cx="12.700" cy="14" r="2.800" fill="#5a3f4e" stroke="none"/></svg>
    <svg style="margin-left:22px" width="25" height="25"><use href="#cat"/></svg>
    <svg style="margin-left:30px" width="5" height="19" viewBox="0 0 5 19" fill="#5a3f4e"><circle cx="2.500" cy="2.200" r="2.100"/><circle cx="2.500" cy="9.500" r="2.100"/><circle cx="2.500" cy="16.800" r="2.100"/></svg>
  </div>
  <div class="bm d-flex align-items-center">
    <svg style="margin-left:23px" width="18" height="18" viewBox="0 0 18 18" fill="none" stroke="#5b5058" stroke-width="2"><path d="M1 1h5.500v5.500H1zM11.500 1H17v5.500h-5.500zM1 11.500h5.500V17H1zM11.500 11.500H17V17h-5.500z"/></svg>
    <i style="width:3px;height:20px;background:#fadcf3;margin:0 10px 0 19px;border-radius:2px"></i>
    <div class="bmchip d-flex align-items-center" style="background:#f7edf2"><svg><use href="#moodle"/></svg>SEMESTRAL 2412(P...</div>
    <div class="bmchip d-flex align-items-center"><svg><use href="#moodle"/></svg>SEMESTRALEXAM 2...</div>
    <div class="bmchip d-flex align-items-center"><svg><use href="#fb"/></svg>Facebook - log in or...</div>
    <div class="bmchip d-flex align-items-center"><svg><use href="#moodle"/></svg>newSEMESTRALEXA...</div>
    <div class="bmchip d-flex align-items-center"><svg><use href="#moodle"/></svg>Final Exam: Attempt...</div>
    <div class="bmchip d-flex align-items-center"><svg><use href="#moodle"/></svg>Midterm Quiz 2: Att...</div>
  </div>
</div></div>

<div class="page d-flex flex-shrink-0">
  <div class="flex-grow-1">
    <div class="ghhead">
      <div class="ghrow d-flex align-items-center">
        <div class="sq w40 d-flex align-items-center justify-content-center"><svg class="oct"><use href="#bars"/></svg></div>
        <svg style="margin:0 19px 0 16px" width="37" height="37" fill="#1f2328"><use href="#mark-gh"/></svg>
        <span class="pt-1" style="letter-spacing:-.02em">annamae06</span><svg style="margin:0 13px 0 14px" width="8" height="20" viewBox="0 0 8 20" stroke="#59636e" stroke-width="1.300"><path d="M7 1 1 19"/></svg><span class="semi pt-1">Event-management-system</span>
        <div class="sq gsearch d-flex align-items-center ms-auto"><svg class="oct"><use href="#find"/></svg><span style="margin-left:9px;letter-spacing:-.015em">Type</span><span class="slashkey text-center">/</span><span style="letter-spacing:-.015em">to search</span></div>
        <div class="sq d-flex align-items-center" style="margin-left:10px;width:70px"><svg class="oct mx-2" style="width:22px"><use href="#copilot"/></svg><i style="width:1px;height:38px;background:#d1d9e0;margin-left:1px"></i><svg class="oct" style="margin-left:4px"><use href="#tri"/></svg></div>
        <i style="width:1px;height:25px;background:#d1d9e0;margin:0 15px"></i>
        <div class="sq d-flex align-items-center" style="width:72px;padding-left:10px"><svg class="oct"><use href="#plus"/></svg><svg class="oct" style="margin:3px 0 0 10px"><use href="#tri"/></svg></div>
        <div class="sq w40 d-flex align-items-center justify-content-center" style="margin-left:10px"><svg class="oct"><use href="#issue"/></svg></div>
        <div class="sq w40 d-flex align-items-center justify-content-center" style="margin-left:10px"><svg class="oct"><use href="#pr"/></svg></div>
        <div class="sq w40 d-flex align-items-center justify-content-center" style="margin-left:10px"><svg class="oct"><use href="#inbox"/></svg></div>
        <svg style="margin-left:10px" width="42" height="42"><use href="#ident"/></svg>
      </div>
      <nav class="ghnav d-flex">
        <a class="on d-flex align-items-center semi" href="#"><svg class="oct"><use href="#code"/></svg>Code</a>
        <a class="d-flex align-items-center" href="#"><svg class="oct"><use href="#issue"/></svg>Issues</a>
        <a class="d-flex align-items-center" href="#"><svg class="oct"><use href="#pr"/></svg>Pull requests</a>
        <a class="d-flex align-items-center" href="#"><svg class="oct"><use href="#play"/></svg>Actions</a>
        <a class="d-flex align-items-center" href="#"><svg class="oct"><use href="#grid"/></svg>Projects</a>
        <a class="d-flex align-items-center" href="#"><svg class="oct"><use href="#book"/></svg>Wiki</a>
        <a class="d-flex align-items-center" href="#"><svg class="oct"><use href="#shield"/></svg>Security</a>
        <a class="d-flex align-items-center" href="#"><svg class="oct"><use href="#graph"/></svg>Insights</a>
        <a class="d-flex align-items-center" href="#"><svg class="oct"><use href="#gear"/></svg>Settings</a>
      </nav>
    </div>

    <div class="wrap">
      <div class="titlebar d-flex align-items-center">
        <svg width="32" height="32" style="margin-left:-1px"><use href="#ident"/></svg>
        <span class="semi" style="font-size:24px;margin-left:8px;width:309px;padding-top:1px">Event-management-system</span>
        <span class="pill text-center" style="margin-left:10px">Public</span>
        <div class="d-flex ms-auto" style="gap:10px;margin-bottom:3px">
          <div class="gbtn d-flex align-items-center" style="width:84px;padding-left:15px"><svg class="oct"><use href="#pin"/></svg><span style="margin-left:10px">Pin</span></div>
          <div class="gbtn d-flex align-items-center" style="width:145px;padding-left:10px"><svg class="oct"><use href="#eye"/></svg><span style="margin-left:5px">Watch</span><span class="cnt" style="margin-left:10px">0</span><svg class="oct" style="margin:2px 0 0 5px"><use href="#tri"/></svg></div>
          <div class="gbtn d-flex align-items-center" style="width:165px"><div class="d-flex align-items-center h-100" style="width:123px;padding-left:15px;background:#eef1f4;color:#818b98"><svg class="oct" style="color:#818b98"><use href="#fork"/></svg><span style="margin-left:10px">Fork</span><span class="cnt" style="margin-left:8px;color:#818b98;background:#e4e8ec">0</span></div><div class="caretbox d-flex align-items-center justify-content-center"><svg class="oct"><use href="#tri"/></svg></div></div>
          <div class="gbtn d-flex align-items-center" style="width:166px"><div class="d-flex align-items-center h-100" style="width:123px;padding-left:15px"><svg class="oct" style="margin-bottom:2px"><use href="#star"/></svg><span style="margin-left:14px">Star</span><span class="cnt" style="margin-left:6px">0</span></div><div class="caretbox d-flex align-items-center justify-content-center"><svg class="oct"><use href="#tri"/></svg></div></div>
        </div>
      </div>

      <div class="d-flex" style="padding-top:30px">
        <div class="maincol">
          <div class="d-flex align-items-center">
            <div class="gbtn gbtn40 d-flex align-items-center" style="width:131px;padding-left:15px"><svg class="oct"><use href="#branch"/></svg><span style="margin-left:9px;letter-spacing:-.025em">main</span><svg class="oct" style="margin-left:10px"><use href="#tri"/></svg></div>
            <svg class="oct" style="margin-left:16px"><use href="#branch"/></svg><span class="muted" style="margin-left:9px;width:79px"><b class="semi text-dark">1</b> Branch</span>
            <svg class="oct"><use href="#tag"/></svg><span class="muted" style="margin-left:10px"><b class="semi text-dark">0</b> Tags</span>
            <div class="gbtn gbtn40 bg-white d-flex align-items-center ms-auto" style="width:282px;padding:0 7px 0 15px;font-weight:400"><svg class="oct"><use href="#find"/></svg><span class="muted" style="margin-left:10px">Go to file</span><span class="ms-auto text-center" style="width:20px;height:23px;border:1px solid #d1d9e0;border-bottom-width:2px;border-radius:7px;background:#f6f8fa;font:13px/20px 'DejaVu Sans Mono',monospace">t</span></div>
            <div class="gbtn gbtn40 d-flex align-items-center" style="width:119px;margin-left:10px;padding:0 10px 0 15px">Add file<svg class="oct ms-auto"><use href="#tri"/></svg></div>
            <div class="gbtn gbtn40 d-flex align-items-center text-white" style="width:134px;margin-left:10px;padding:0 15px;background:#1f883d;border-color:#1c7d38"><svg class="oct text-white"><use href="#code"/></svg><span style="margin-left:10px">Code</span><svg class="oct text-white ms-auto"><use href="#tri"/></svg></div>
          </div>

          <div class="box" style="margin-top:20px;height:118px">
            <div class="boxhead d-flex align-items-center" style="padding-left:15px">
              <svg width="27" height="27"><use href="#ident"/></svg><span class="semi" style="margin-left:9px">annamae06</span><span class="muted" style="margin-left:9px">Initial commit</span>
              <span class="muted t15 ms-auto" style="letter-spacing:.003em">262cd49 · 14 minutes ago</span>
              <svg class="oct" style="margin-left:20px"><use href="#history"/></svg><span class="t15 semi" style="margin:0 27px 0 5px;letter-spacing:-.025em">1 Commit</span>
            </div>
            <div class="d-flex align-items-center" style="height:50px;padding:0 20px"><svg class="oct"><use href="#file"/></svg><span style="margin-left:12px;width:415px">README.md</span><span class="muted">Initial commit</span><span class="muted ms-auto">14 minutes ago</span></div>
          </div>

          <div class="box rdbox" style="margin-top:19px">
            <div class="rdtop d-flex align-items-start">
              <div class="rdtab d-flex align-items-center"><svg class="oct"><use href="#book"/></svg><span class="semi" style="letter-spacing:-.005em">README</span></div>
              <svg class="oct ms-auto" style="margin:20px 29px 0 0"><use href="#pencil"/></svg>
            </div>
            <h1 class="rdh">Event-management-system</h1>
          </div>
        </div>

        <aside class="sidecol d-flex flex-column">
          <div class="d-flex align-items-center" style="height:40px"><span class="t20 semi pt-1" style="letter-spacing:-.015em">About</span><svg class="oct ms-auto"><use href="#gear"/></svg></div>
          <div class="t20 muted fst-italic text-nowrap" style="margin:18px 0 15px;letter-spacing:0">No description, website, or topics provided.</div>
          <div class="sideitem d-flex align-items-center muted"><svg class="oct"><use href="#book"/></svg>Readme</div>
          <div class="sideitem d-flex align-items-center muted"><svg class="oct"><use href="#pulse"/></svg>Activity</div>
          <div class="sideitem d-flex align-items-center muted"><svg class="oct"><use href="#star"/></svg><span><b class="semi">0</b> stars</span></div>
          <div class="sideitem d-flex align-items-center muted"><svg class="oct"><use href="#eye"/></svg><span><b class="semi">0</b> watching</span></div>
          <div class="sideitem d-flex align-items-center muted"><svg class="oct"><use href="#fork"/></svg><span><b class="semi">0</b> forks</span></div>
          <div class="sdiv" style="margin-top:15px;padding-top:23px"><div class="t20 semi">Releases</div></div>
          <div class="t15 muted" style="margin-top:22px">No releases published</div>
          <a class="glink t15" href="#" style="margin-top:2px">Create a new release</a>
          <div class="sdiv" style="margin-top:21px;padding-top:23px"><div class="t20 semi">Packages</div></div>
          <div class="t15 muted" style="margin-top:22px">No packages published</div>
          <a class="glink t15" href="#" style="margin-top:2px">Publish your first package</a>
        </aside>
      </div>
    </div>
  </div>
  <div class="sbar d-flex flex-column align-items-center">
    <svg style="margin:6px 0 6px" width="14" height="11" viewBox="0 0 14 11" fill="#8b8b8b"><path d="M7 0q.8 0 1.300 1L13 9q.8 1.500-1 1.500H2Q.2 10.500 1 9L5.700 1Q6.200 0 7 0z"/></svg>
    <div class="thumb"></div>
    <svg class="mt-auto" style="margin-bottom:5px" width="14" height="11" viewBox="0 0 14 11" fill="#8b8b8b"><path d="M7 10.500q-.8 0-1.300-1L1 1.500Q.2 0 2 0h10q1.800 0 1 1.500l-4.700 8q-.5 1-1.300 1z"/></svg>
  </div>
</div>

<footer class="taskbar d-flex align-items-center flex-shrink-0 flex-grow-1">
  <i class="peek"></i>
  <svg style="margin-left:24px;margin-bottom:4px" width="37" height="38" viewBox="0 0 37 38"><path fill="#f5a623" d="M4 23c5 3 11 0 13-6 8 0 13 6 12 11-2 9-20 12-25-5z"/><path fill="#9bb9ee" stroke="#7d9fdc" stroke-width=".6" d="M4 18a4 4 0 0 1 0-7.500C5 5 12 4 14 9c5 0 6 9 1 9z"/><path fill="#b7cff5" stroke="#7d9fdc" stroke-width=".6" d="M17 34a4 4 0 0 1 0-8c1-5 8-6 10-1 5 0 6 9 1 9z"/><circle cx="25" cy="10" r="10" fill="#c42b1c"/><text x="25" y="15" text-anchor="middle" font-size="14" fill="#fff" font-family="Open Sans">3</text></svg>
  <div class="two" style="margin-left:3px;width:466px;padding-bottom:3px">27°C<br><span style="color:#5c5c5c">Partly cloudy</span></div>
  <svg width="29" height="29" viewBox="0 0 29 29"><defs><linearGradient id="wg" x2="1" y2="1"><stop stop-color="#4cc8fb"/><stop offset="1" stop-color="#0067c8"/></linearGradient></defs><path fill="url(#wg)" d="M0 1q0-1 1-1h13v14H0zM15 0h13q1 0 1 1v13H15zM0 15h14v14H1q-1 0-1-1zM15 15h14v13q0 1-1 1H15z"/></svg>
  <div class="tsearch d-flex align-items-center" style="margin-left:17px;margin-right:2px"><svg width="20" height="20" viewBox="0 0 20 20" fill="none" stroke="#222" stroke-width="2.200"><circle cx="8.500" cy="8" r="6.700"/><path d="m13 13 5.500 6"/></svg><span style="margin-left:12px;font-size:16.800px;letter-spacing:-.01em;color:#5f5f5f">Search</span></div>
  <div class="app d-flex align-items-center justify-content-center"><svg viewBox="0 0 30 30"><rect y="8" width="23" height="20" rx="1" fill="#2b2b2b"/><rect x="8" y="1" width="22" height="19" rx="1" fill="#fff" opacity=".92"/><path fill="#c9c9c9" d="M8 8h15v12H8z"/></svg></div>
  <div class="app d-flex align-items-center justify-content-center"><svg viewBox="0 0 30 30"><path fill="#0078c8" d="M21 0 2 17.500v3L5 23 22 10z"/><path fill="#1c8fdc" d="M2 9.500 5 7l17 13v10L2 12.500z"/><path fill="#2aa7f2" d="m21 0 8 3.500v23L21 30z"/></svg></div>
  <div class="app run d-flex align-items-center justify-content-center"><svg viewBox="0 0 30 30"><path fill="#e09b0c" d="M0 4q0-2 2-2h9l3 4h14v8H0z"/><path fill="#fdd04b" d="M0 9q0-1 1-1h10l3-3h14q2 0 2 2v19q0 2-2 2H2q-2 0-2-2z"/><path fill="#157dce" d="M5 28v-5q0-3 3-3h14q3 0 3 3v5z"/><path fill="#0a5a9c" d="M9 24h12v2H9z"/></svg></div>
  <div class="app d-flex align-items-center justify-content-center"><svg viewBox="0 0 30 30"><path fill="#41a5ee" d="M7 3q0-2 2-2h19q2 0 2 2v5H7z"/><path fill="#2b7cd3" d="M7 8h23v7H7z"/><path fill="#185abd" d="M7 15h23v7H7z"/><path fill="#103f91" d="M7 22h23v5q0 2-2 2H9q-2 0-2-2z"/><rect y="7" width="16" height="16" rx="1.500" fill="#185abd"/><text x="8" y="19.500" text-anchor="middle" font-size="12" font-weight="700" fill="#fff" font-family="Open Sans">W</text></svg></div>
  <div class="app d-flex align-items-center justify-content-center"><svg viewBox="0 0 30 30"><circle cx="16" cy="5" r="4" fill="#7b83eb"/><circle cx="25" cy="6" r="3" fill="#5059c9"/><path fill="#7b83eb" d="M9 10h14v12a7 7 0 0 1-14 0z"/><path fill="#5059c9" d="M23 10h6v9a4 4 0 0 1-6 3z"/><rect y="8" width="15" height="16" rx="1.500" fill="#4b53bc"/><text x="7.500" y="20.500" text-anchor="middle" font-size="12" font-weight="700" fill="#fff" font-family="Open Sans">T</text><circle cx="23" cy="20.500" r="8" fill="#5a4440"/><circle cx="23" cy="18" r="3.500" fill="#b98a76"/><path fill="#1c1a1c" d="M16 26a8 7 0 0 1 14 0q-3 4-7 3-5 0-7-3zM17.500 18q0-6 5.500-6t5.500 6q-5-3-11 0z"/></svg></div>
  <div class="app d-flex align-items-center justify-content-center"><svg><use href="#chromeapp"/></svg></div>
  <div class="app run d-flex align-items-center justify-content-center"><svg viewBox="0 0 30 30"><defs><linearGradient id="eg" x2="1"><stop stop-color="#1fa7e6"/><stop offset="1" stop-color="#57dd6c"/></linearGradient></defs><path fill="url(#eg)" d="M0 14C1 6 7 0 15 0c9 0 15 6 15 13 0 5-4 8-8 8-3 0-5-1-4-3 4-5-1-10-6-10C6 8 2 10 0 14z"/><path fill="#1463b8" d="M0 14c2-5 7-7 12-6-4 1-6 5-5 10 1 6 7 10 13 11-9 3-20-3-20-15z"/><path fill="#0f4f9e" d="M11 14c-2 8 5 14 16 9-3 5-9 8-14 6-7-3-8-11-2-15z"/></svg></div>
  <div class="app run d-flex align-items-center justify-content-center"><svg><use href="#chromeapp"/></svg><svg class="who"><use href="#cat"/></svg></div>
  <div class="app run d-flex align-items-center justify-content-center"><svg viewBox="0 0 30 30"><circle cx="15" cy="15" r="11" fill="#767d84"/><g stroke="#767d84" stroke-width="8"><path d="M15 1v28M2.900 8l24.200 14M2.900 22 27.100 8"/></g><circle cx="15" cy="15" r="6.500" fill="#50565c"/><circle cx="15" cy="15" r="5" fill="#0a66b4"/></svg></div>
  <div class="app run wide d-flex align-items-center justify-content-center"><svg style="margin-top:12px;z-index:1" viewBox="0 0 30 30"><rect x="5" y="5" width="13" height="13" rx="2" fill="#fafafa"/><path d="M3 18V4h13v3" fill="none" stroke="#d83b01" stroke-width="3" stroke-dasharray="3 1.500"/><path d="M3 17v2h4M17 5v9" fill="none" stroke="#f08a5d" stroke-width="2"/><path d="m8 13 17 4.500M15 10v14" stroke="#8aa2b3" stroke-width="2"/><circle cx="26" cy="17" r="3" fill="none" stroke="#1f8fd6" stroke-width="2"/><circle cx="16" cy="26" r="2.800" fill="none" stroke="#1f8fd6" stroke-width="2"/></svg></div>
  <div class="d-flex align-items-center ms-auto">
    <svg width="14" height="8" viewBox="0 0 14 8" fill="none" stroke="#222" stroke-width="1.600"><path d="m1 7 6-6 6 6"/></svg>
    <svg style="margin-left:23px" width="21" height="20" viewBox="0 0 21 20"><path fill="#a9a9a9" stroke="#555" stroke-width="1.400" d="M5 14a4.500 4.500 0 0 1 0-8c2-5 9-5 11 0l2 4-8 5z"/><circle cx="14.500" cy="13.500" r="6" fill="#d92b2b"/><path d="m12.300 11.300 4.400 4.400M16.700 11.300l-4.400 4.400" stroke="#fff" stroke-width="1.600"/></svg>
    <div class="two text-center" style="margin-left:22px;width:32px">ENG<br>US</div>
    <svg style="margin-left:21px" width="20" height="16" viewBox="0 0 20 16" fill="none" stroke="#222" stroke-width="1.500"><path d="M1 6a12.500 12.500 0 0 1 18 0M4 9a8.300 8.300 0 0 1 12 0M7 12a4.200 4.200 0 0 1 6 0"/><circle cx="10" cy="14" r="1.500" fill="#222" stroke="none"/></svg>
    <svg style="margin-left:9px" width="19" height="17" viewBox="0 0 19 17" fill="none" stroke="#222" stroke-width="1.400"><path d="M1 6v5h3l5 4.500v-14L4 6zM12 5.500q2 3 0 6"/><path d="M14.500 3q3.500 5.500 0 11"/><path d="M17 1.500q3 7 0 14" stroke="#bbb"/></svg>
    <svg style="margin-left:11px" width="21" height="18" viewBox="0 0 21 18" fill="none" stroke="#222" stroke-width="1.500"><path d="M7 4h9a2 2 0 0 1 2 2v8a2 2 0 0 1-2 2H4a2 2 0 0 1-2-2v-3"/><path fill="#222" stroke="none" d="M5 9 8 6h8v8H4v-3zM19 8h1.500v4H19zM5.500 0 0 7.500h3L2 12l6-7H4.700z"/></svg>
    <div class="two text-end" style="margin-left:12px;width:85px;padding-bottom:2px">11:52 pm<br>28/05/2025</div>
    <svg style="margin:0 26px 0 12px" width="17" height="19" viewBox="0 0 17 19" fill="none" stroke="#222" stroke-width="1.300"><path d="M8 2C5 2 3.300 4 3.300 7v3.500L1.500 14.500H15L13.500 11M6 15.500a2.200 2.200 0 0 0 4.500 0M5.800 7h3.500l-3.500 4.500h3.800M11.500 1H16l-4.500 5H16"/></svg>
  </div>
</footer>
<script src="https://cdn.jsdelivr.net/npm/bootstrap@5.3.0/dist/js/bootstrap.bundle.min.js"></script>
</body>
</html>
